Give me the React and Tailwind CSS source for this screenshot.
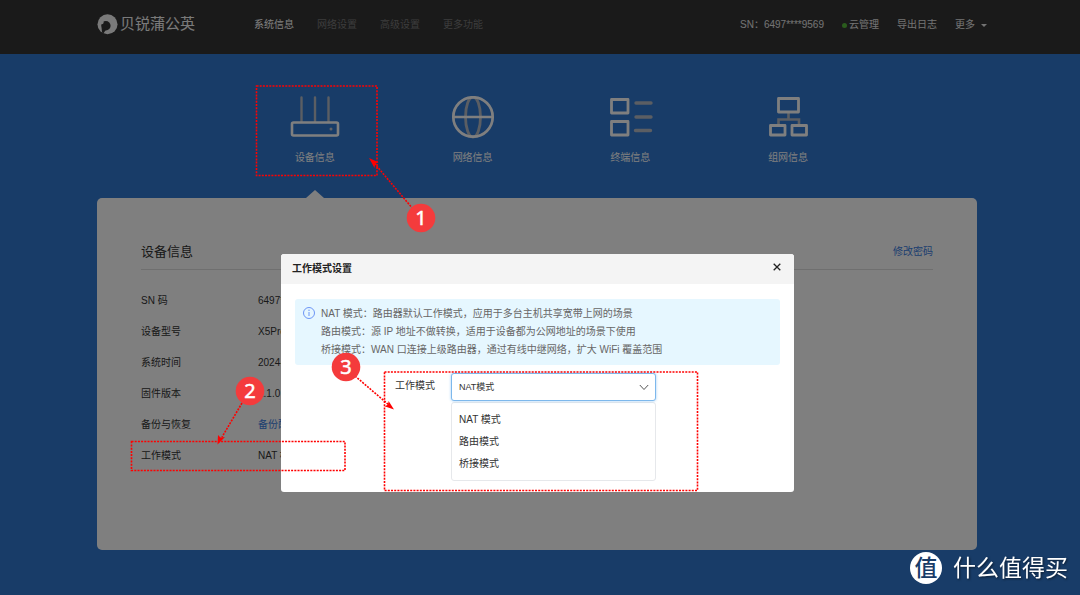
const FONT = "font-['Liberation_Sans','Noto_Sans_CJK_SC',sans-serif]";

const navItems = ["系统信息", "网络设置", "高级设置", "更多功能"];

const rows = [
  ["SN 码", "6497****9569"],
  ["设备型号", "X5Pro"],
  ["系统时间", "2024-03-12"],
  ["固件版本", "2.1.0"],
  ["备份与恢复", "备份配置"],
  ["工作模式", "NAT 模式"],
];

const notes = [
  "NAT 模式：路由器默认工作模式，应用于多台主机共享宽带上网的场景",
  "路由模式：源 IP 地址不做转换，适用于设备都为公网地址的场景下使用",
  "桥接模式：WAN 口连接上级路由器，通过有线中继网络，扩大 WiFi 覆盖范围",
];

const modes = ["NAT 模式", "路由模式", "桥接模式"];

function RouterIcon() {
  return (
    <svg width="50" height="44" viewBox="0 0 50 44" fill="none" aria-hidden="true">
      <path d="M11.5 1.500v24M25 1.500v24M38.500 1.500v24" stroke="#b6bcc6" strokeWidth="2.400" strokeLinecap="round" />
      <rect x="2" y="26.500" width="46" height="13" rx="1.500" stroke="#fff" strokeWidth="2.600" />
      <circle cx="41" cy="33" r="1.500" fill="#c4c8ce" />
    </svg>
  );
}

function GlobeIcon() {
  return (
    <svg width="44" height="44" viewBox="0 0 44 44" fill="none" aria-hidden="true">
      <ellipse cx="22" cy="21" rx="7.500" ry="20" stroke="#b6bcc6" strokeWidth="2.800" />
      <path d="M2 21h40" stroke="#fff" strokeWidth="2.600" />
      <circle cx="22" cy="21" r="19.700" stroke="#fff" strokeWidth="2.700" />
    </svg>
  );
}

function TerminalIcon() {
  return (
    <svg width="46" height="44" viewBox="0 0 46 44" fill="none" aria-hidden="true">
      <rect x="4.500" y="3.500" width="16.500" height="13.500" stroke="#fff" strokeWidth="2.800" strokeLinejoin="round" />
      <rect x="4.500" y="25.500" width="16.500" height="13.500" stroke="#fff" strokeWidth="2.800" strokeLinejoin="round" />
      <path d="M29 7h15M29 21h15M28.500 34.500h15" stroke="#b6bcc6" strokeWidth="3.400" strokeLinecap="round" />
    </svg>
  );
}

function TopologyIcon() {
  return (
    <svg width="40" height="44" viewBox="0 0 40 44" fill="none" aria-hidden="true">
      <path d="M20.500 17v6M10.500 30v-6.500H31V30" stroke="#b6bcc6" strokeWidth="2.600" />
      <rect x="10.500" y="2.500" width="20" height="13.500" stroke="#fff" strokeWidth="2.800" strokeLinejoin="round" />
      <rect x="2.500" y="29.500" width="14.500" height="9.500" stroke="#fff" strokeWidth="2.800" strokeLinejoin="round" />
      <rect x="24" y="29.500" width="14.500" height="9.500" stroke="#fff" strokeWidth="2.800" strokeLinejoin="round" />
    </svg>
  );
}

const tabs = [
  ["设备信息", RouterIcon],
  ["网络信息", GlobeIcon],
  ["终端信息", TerminalIcon],
  ["组网信息", TopologyIcon],
];

function Header() {
  return (
    <header className="bg-[#343434] pr-1.5">
      <div className="mx-auto flex h-[54px] max-w-[880px] items-center pb-1.5">
        <a href="#home" className="flex items-center gap-0.5 text-[#f5f5f5]">
          <svg width="21" height="21" viewBox="0 0 21 21" aria-hidden="true">
            <circle cx="10.500" cy="10.200" r="10" fill="currentColor" />
            <circle cx="8.900" cy="11.800" r="4.700" fill="#343434" />
            <path d="M4.600 13.500 5 18.400l1.500.8 2.300-3.200z" fill="#343434" />
            <circle cx="4.900" cy="8.600" r="1.700" fill="currentColor" />
          </svg>
          <span className="text-[15px] leading-5">贝锐蒲公英</span>
        </a>
        <nav className="ml-[59px] flex gap-[23px] pt-0.5">
          {navItems.map((item, i) => (
            <a key={item} href="#nav" className={i === 0 ? "text-white" : "text-[#7a7a7a]"}>
              {item}
            </a>
          ))}
        </nav>
        <div className="ml-auto mr-[-10px] flex items-center gap-[18px] pt-0.5 text-[#e6e6e6]">
          <span>SN：6497****9569</span>
          <a href="#cloud" className="flex items-center gap-0.5">
            <span className="size-[5px] rounded-full bg-[#55b83a]" />
            云管理
          </a>
          <a href="#log">导出日志</a>
          <button type="button" className="flex items-center gap-1.5">
            更多
            <span className="border-x-3 border-t-3 border-x-transparent border-t-[#e6e6e6]" />
          </button>
        </div>
      </div>
    </header>
  );
}

function Tabs() {
  return (
    <div className="ml-[139px] grid w-[631px] max-w-full grid-cols-4 pt-[42px]">
      {tabs.map(([label, Icon], i) => (
        <button key={label} type="button" className="flex flex-col items-center text-white">
          <Icon />
          <span className="mt-2.5 leading-4">{label}</span>
          <span
            className={
              i === 0
                ? "mt-6 border-x-9 border-b-8 border-x-transparent border-b-white"
                : "mt-6 border-b-8 border-transparent"
            }
          />
        </button>
      ))}
    </div>
  );
}

function DevicePanel() {
  return (
    <section className="rounded-[5px] bg-white px-11 pt-11 pb-[79px]">
      <div className="flex items-center justify-between border-b border-[#dedede] pb-[7px]">
        <h2 className="text-[13px] leading-5 text-[#333]">设备信息</h2>
        <a href="#password" className="text-[#3a7ce0]">修改密码</a>
      </div>
      <dl className="pt-[15px] text-[#333]">
        {rows.map(([name, value]) => (
          <div key={name} className="flex h-[31px] items-center">
            <dt className="w-[117px]">{name}</dt>
            <dd className={name === "备份与恢复" ? "text-[#3a7ce0]" : ""}>{value}</dd>
          </div>
        ))}
      </dl>
    </section>
  );
}

function ModeDialog() {
  return (
    <div
      role="dialog"
      aria-labelledby="dialog-title"
      className="w-[513px] max-w-full self-start overflow-hidden rounded-[3px] bg-white pb-[11px] text-[#333]"
    >
      <div className="flex h-[30px] items-start justify-between bg-[#f4f4f4] px-[11px] pt-[7px]">
        <h3 id="dialog-title" className="font-bold text-[#222]">工作模式设置</h3>
        <button type="button" aria-label="关闭" className="flex size-3 items-center justify-center">
          <svg width="8" height="8" viewBox="0 0 8 8" aria-hidden="true">
            <path d="M.7.7l6.600 6.600M7.300.7.7 7.300" stroke="#222" strokeWidth="1.300" />
          </svg>
        </button>
      </div>
      <div className="mx-[14px] mt-[15px] flex gap-1.5 rounded-[3px] bg-[#e6f7ff] px-2 py-1.5">
        <svg className="mt-0.5 shrink-0" width="12" height="12" viewBox="0 0 12 12" fill="none" aria-hidden="true">
          <circle cx="6" cy="6" r="5.500" stroke="#6c95f5" />
          <path d="M6 5v4" stroke="#6c95f5" />
          <circle cx="6" cy="3.300" r=".7" fill="#6c95f5" />
        </svg>
        <div className="text-[#666]">
          {notes.map((note) => (
            <p key={note} className="leading-[18px]">{note}</p>
          ))}
        </div>
      </div>
      <div className="ml-[114px] mt-2 flex">
        <label htmlFor="mode" className="w-14 pt-1 leading-[18px]">工作模式</label>
        <div className="w-[205px]">
          <div className="relative">
            <select
              id="mode"
              className="block h-7 w-full appearance-none rounded-[3px] border border-[#7db8ec] bg-white px-[7px] text-[9px] shadow-[0_0_3px_#9fcdf5] outline-none"
            >
              <option>NAT模式</option>
            </select>
            <svg className="pointer-events-none absolute top-[11px] right-[7px]" width="10" height="7" viewBox="0 0 10 7" fill="none" aria-hidden="true">
              <path d="m.8 1 4.200 4.500L9.200 1" stroke="#555" />
            </svg>
          </div>
          <ul className="mt-px rounded-[3px] border border-[#e6e8eb] px-[7px] pt-1.5 pb-[5px]">
            {modes.map((mode) => (
              <li key={mode}>
                <button type="button" className="block w-full text-left leading-[22px]">{mode}</button>
              </li>
            ))}
          </ul>
        </div>
      </div>
    </div>
  );
}

function Marker({ x, y, n }) {
  return (
    <g>
      <circle cx={x} cy={y} r="14.300" fill="#f43b3c" />
      <text x={x} y={y + 7} textAnchor="middle" fontSize="20" fill="#fff" stroke="#fff" strokeWidth=".5">
        {n}
      </text>
    </g>
  );
}

function Annotations() {
  return (
    <svg
      className="pointer-events-none absolute top-0 left-0 overflow-visible font-['Noto_Sans',sans-serif]"
      width="880"
      height="595"
      viewBox="97 0 880 595"
      fill="none"
    >
      <g stroke="#f00" strokeWidth="1.600" strokeDasharray="2 1.200">
        <rect x="256.500" y="86" width="120.500" height="89.500" />
        <rect x="131.500" y="441.500" width="213.500" height="29" />
        <rect x="384.500" y="372" width="313" height="118.500" />
        <path d="M413 209 375 164M242 403l-20 34M355 376l34 29" />
      </g>
      <g fill="#f00">
        <path d="m369 158 9.500 4.200-3.300 1.700-.7 4z" />
        <path d="m217.500 444.500.5-9.500 2.500 2.500 4.500-.5z" />
        <path d="m394 409.500-9.500-3.200 3.500-1.500.6-3.800z" />
      </g>
      <Marker x={421} y={218} n="1" />
      <Marker x={250} y={391} n="2" />
      <Marker x={346} y={367} n="3" />
    </svg>
  );
}

export default function App() {
  return (
    <div className={`relative min-h-screen bg-[#3078d0] text-[10px] leading-4 ${FONT}`}>
      <Header />
      <main className="pr-1.5 pb-11">
        <div className="mx-auto max-w-[880px]">
          <Tabs />
          <DevicePanel />
        </div>
      </main>
      <div className="absolute inset-0 flex justify-center bg-black/50 pt-[254px] pr-[5px]">
        <ModeDialog />
      </div>
      <div className="pointer-events-none absolute inset-0 pr-1.5">
        <div className="relative mx-auto max-w-[880px]">
          <Annotations />
        </div>
      </div>
      <div className="absolute right-3 bottom-[11px] flex items-center gap-[11px] text-white">
        <span className="flex size-8 items-center justify-center rounded-full bg-white text-[23px] leading-8 font-medium text-[#183c68]">
          值
        </span>
        <span className="text-[23px] leading-8 drop-shadow-[1px_1px_1px_#0008]">什么值得买</span>
      </div>
    </div>
  );
}
